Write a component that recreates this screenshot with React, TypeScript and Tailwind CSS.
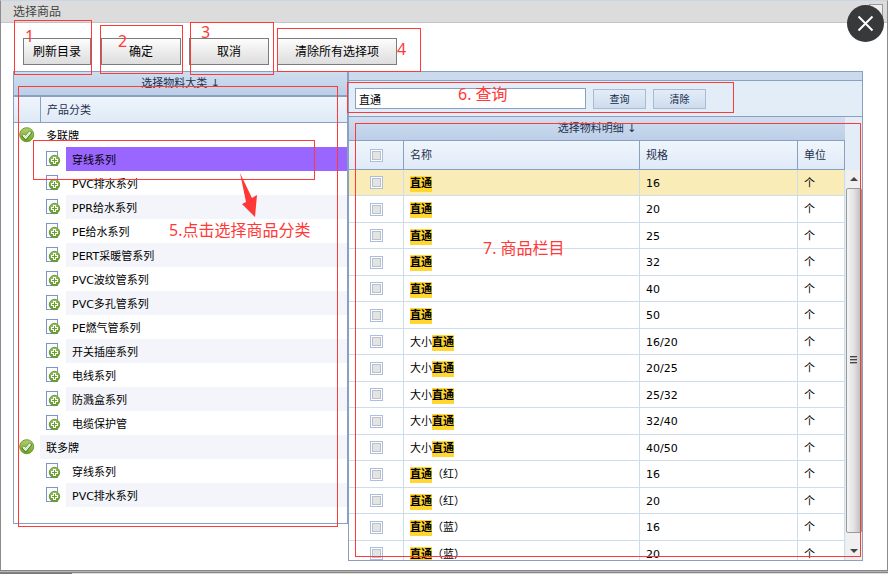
import React from "react";

type Category = { name: string; items: string[] };

const categories: Category[] = [
  {
    name: "多联牌",
    items: [
      "穿线系列",
      "PVC排水系列",
      "PPR给水系列",
      "PE给水系列",
      "PERT采暖管系列",
      "PVC波纹管系列",
      "PVC多孔管系列",
      "PE燃气管系列",
      "开关插座系列",
      "电线系列",
      "防溅盒系列",
      "电缆保护管",
    ],
  },
  { name: "联多牌", items: ["穿线系列", "PVC排水系列"] },
];

const products = [
  { before: "", after: "", spec: "16" },
  { before: "", after: "", spec: "20" },
  { before: "", after: "", spec: "25" },
  { before: "", after: "", spec: "32" },
  { before: "", after: "", spec: "40" },
  { before: "", after: "", spec: "50" },
  { before: "大小", after: "", spec: "16/20" },
  { before: "大小", after: "", spec: "20/25" },
  { before: "大小", after: "", spec: "25/32" },
  { before: "大小", after: "", spec: "32/40" },
  { before: "大小", after: "", spec: "40/50" },
  { before: "", after: "（红）", spec: "16" },
  { before: "", after: "（红）", spec: "20" },
  { before: "", after: "（蓝）", spec: "16" },
  { before: "", after: "（蓝）", spec: "20" },
];

function CheckIcon() {
  return (
    <svg width="16" height="16" viewBox="0 0 16 16" className="shrink-0">
      <defs>
        <linearGradient id="brand" x1="0" y1="0" x2="0" y2="1">
          <stop offset="0" stopColor="#b5cf70" />
          <stop offset="1" stopColor="#69a81f" />
        </linearGradient>
      </defs>
      <circle cx="7.7" cy="7.7" r="7" fill="url(#brand)" stroke="#6f9a33" />
      <path d="M3.6 7.8 6.7 10.9 11.8 4.6" fill="none" stroke="#4f7d24" strokeWidth="3.8" />
      <path d="M4.2 8 6.7 10.5 11.3 5" fill="none" stroke="#fff" strokeWidth="2.2" />
      <path d="M4.6 8.4 6.7 10.3 11 5.4" fill="none" stroke="#8fb552" strokeWidth="0.5" />
    </svg>
  );
}

function PageAddIcon() {
  return (
    <svg width="16" height="16" viewBox="0 0 16 16" className="shrink-0">
      <defs>
        <linearGradient id="leaf" x1="0" y1="0" x2="0" y2="1">
          <stop offset="0" stopColor="#9cc35a" />
          <stop offset="1" stopColor="#5a9a1c" />
        </linearGradient>
      </defs>
      <rect x="0.5" y="0.5" width="11" height="14" fill="#fbfcff" stroke="#7f93c6" />
      <circle cx="8.5" cy="9.5" r="5.2" fill="url(#leaf)" stroke="#6a9a3a" />
      <path d="M8.5 6v7M5 9.5h7" stroke="#fff" strokeWidth="3" />
      <path d="M8.5 7v5M6 9.5h5" stroke="#6da034" strokeWidth="1" />
    </svg>
  );
}

function ToolButton({ children, size }: { children: React.ReactNode; size: string }) {
  return (
    <button
      type="button"
      className={`h-[27px] border border-[#7c7c7c] bg-linear-to-b from-[#fdfdfd] via-[#ececec] to-[#dedede] text-xs text-black ${size}`}
    >
      {children}
    </button>
  );
}

function SearchButton({ children }: { children: React.ReactNode }) {
  return (
    <button
      type="button"
      className="h-5 w-[53px] border border-[#a9b9d6] bg-linear-to-b from-[#e3edf8] to-[#cddcee] pt-0.5 text-[10px] leading-4 text-[#15294b]"
    >
      {children}
    </button>
  );
}

function Tick({ label }: { label: string }) {
  return (
    <input
      type="checkbox"
      aria-label={label}
      className="mx-auto block size-[13px] appearance-none border border-[#a9bfdf] bg-[#e3e4e6] shadow-[inset_0_0_0_1px_#fff,inset_0_0_0_2px_#bcc0c6]"
    />
  );
}

function CategoryTree() {
  let index = -1;
  return (
    <ul className="pb-4">
      {categories.map((category) => {
        index += 1;
        return (
          <li key={category.name}>
            <div className="flex h-6 items-center pl-[5px]">
              <CheckIcon />
              <button
                type="button"
                className={`ml-[5px] h-6 flex-1 pt-1 pl-1.5 text-left ${index % 2 ? "bg-[#f4f5fa]" : ""}`}
              >
                {category.name}
              </button>
            </div>
            <ul>
              {category.items.map((item) => {
                index += 1;
                const tone = index === 1 ? "bg-[#9966ff]" : index % 2 ? "bg-[#f4f5fa]" : "";
                return (
                  <li key={item} className="flex h-6 items-center pl-8">
                    <PageAddIcon />
                    <button type="button" className={`ml-1 h-6 flex-1 pt-1 pl-1.5 text-left ${tone}`}>
                      {item}
                    </button>
                  </li>
                );
              })}
            </ul>
          </li>
        );
      })}
    </ul>
  );
}

function ProductTable() {
  return (
    <table className="w-full table-fixed border-separate border-spacing-0">
      <colgroup>
        <col className="w-[55px]" />
        <col />
        <col className="w-[158px]" />
        <col className="w-[47px]" />
      </colgroup>
      <thead>
        <tr className="h-[29px] bg-linear-to-b from-[#eff5fc] to-[#dfeaf7] text-left text-[#1f2f4d] *:border-r *:border-b *:border-[#8ba0c0] *:p-0 *:font-normal *:not-first:pt-0.5">
          <th>
            <Tick label="全选" />
          </th>
          <th>
            <span className="pl-1.5">名称</span>
          </th>
          <th>
            <span className="pl-1.5">规格</span>
          </th>
          <th>
            <span className="pl-1.5">单位</span>
          </th>
        </tr>
      </thead>
      <tbody>
        {products.map((product, i) => (
          <tr
            key={i}
            className={`*:border-r *:border-b *:border-[#cfdcec] *:p-0 *:not-first:pt-0.5 ${i % 2 ? "h-[27px]" : "h-[26px]"} ${i === 0 ? "bg-[#f9ecb7]" : "bg-white"}`}
          >
            <td>
              <Tick label={`选择 ${product.before}直通${product.after} ${product.spec}`} />
            </td>
            <td>
              <div className="pl-1.5">
                {product.before}
                <mark className="inline-block h-4 bg-[#ffd632] align-baseline leading-4 font-bold text-black">
                  直通
                </mark>
                <span className="font-['DejaVu_Sans','Noto_Sans_CJK_TC',sans-serif]">{product.after}</span>
              </div>
            </td>
            <td>
              <span className="pl-1.5">{product.spec}</span>
            </td>
            <td>
              <span className="pl-1.5">个</span>
            </td>
          </tr>
        ))}
      </tbody>
    </table>
  );
}

function ScrollBar() {
  return (
    <div className="flex w-[17px] shrink-0 flex-col bg-[#e3edf8] pt-[53px]">
      <div className="ml-px flex flex-1 flex-col bg-[#f0f0f0]">
        <button type="button" aria-label="向上滚动" className="flex h-[18px] items-center justify-center">
          <svg width="8" height="4" viewBox="0 0 8 4">
            <path d="M4 0 8 4H0z" fill="#444" />
          </svg>
        </button>
        <div className="flex flex-1 items-center justify-center rounded-xs border border-[#999] bg-linear-to-r from-[#f5f5f5] via-[#e2e2e2] to-[#bdbdbd]">
          <svg width="8" height="9" viewBox="0 0 8 9">
            <path d="M0 .5h7M0 3.5h7M0 6.5h7" stroke="#444" />
            <path d="M0 1.5h7M0 4.5h7M0 7.5h7" stroke="#aaa" />
          </svg>
        </div>
        <button type="button" aria-label="向下滚动" className="flex h-[27px] items-center justify-center pt-2">
          <svg width="8" height="4" viewBox="0 0 8 4">
            <path d="M0 0h8L4 4z" fill="#444" />
          </svg>
        </button>
      </div>
    </div>
  );
}

function Frame({ place }: { place: string }) {
  return <div className={`absolute border border-[#ff3838] ${place}`} />;
}

function Note({ place, children }: { place: string; children: React.ReactNode }) {
  return (
    <span className={`absolute leading-5 text-base whitespace-nowrap text-[#ff3838] ${place}`}>{children}</span>
  );
}

function Annotations() {
  return (
    <div className="pointer-events-none absolute inset-0 font-['Noto_Sans','Noto_Sans_CJK_SC',sans-serif]">
      <Frame place="left-[14px] top-[20px] w-[78px] h-[55px]" />
      <Frame place="left-[100px] top-[25px] w-[83px] h-[49px]" />
      <Frame place="left-[190px] top-[22px] w-[84px] h-[53px]" />
      <Frame place="left-[277px] top-[28px] w-[144px] h-[44px]" />
      <Frame place="left-[347px] top-[82px] w-[387px] h-[31px]" />
      <Frame place="left-[18px] top-[86px] w-[320px] h-[441px]" />
      <Frame place="left-[33px] top-[140px] w-[282px] h-[40px]" />
      <Frame place="left-[355px] top-[123px] w-[506px] h-[434px]" />
      <Note place="left-[25px] top-[26px]">1</Note>
      <Note place="left-[118px] top-[31px]">2</Note>
      <Note place="left-[201px] top-[22px]">3</Note>
      <Note place="left-[397px] top-[39px]">4</Note>
      <Note place="left-[169px] top-[220px]">5.点击选择商品分类</Note>
      <Note place="left-[458px] top-[84px]">6. 查询</Note>
      <Note place="left-[483px] top-[238px]">7. 商品栏目</Note>
      <svg className="absolute top-[173px] left-[239px]" width="20" height="44" viewBox="0 0 20 44">
        <path d="M1 0 13 25 18 22 16 44 3 31 7 29z" fill="#ff3838" />
      </svg>
    </div>
  );
}

export default function App() {
  return (
    <div className="relative flex h-screen flex-col overflow-hidden bg-white font-['DejaVu_Sans','Noto_Sans_CJK_SC',sans-serif] text-[11px] leading-4 text-black">
      <main className="flex min-h-0 flex-1 flex-col border-x border-t border-x-[#8c8c8c] border-t-[#c9d6e8]">
        <header className="flex h-[22px] shrink-0 items-center border-b border-[#c4c4c4] bg-[#dcdcdc] pl-3">
          <h1 className="text-xs text-[#444]">选择商品</h1>
        </header>

        <div className="flex shrink-0 gap-2 pt-[15px] pb-1.5 pl-[22px]">
          <ToolButton size="w-[68px] mr-0.5">刷新目录</ToolButton>
          <ToolButton size="w-20">确定</ToolButton>
          <ToolButton size="w-20">取消</ToolButton>
          <ToolButton size="w-[120px]">清除所有选择项</ToolButton>
        </div>

        <div className="flex min-h-0 flex-1 items-start pr-6 pb-[9px] pl-3">
          <section className="w-[335px] shrink-0 border border-[#8ba0c0]">
            <h2 className="h-[25px] border-b-2 border-[#8ba0c0] bg-linear-to-b from-[#cfdeef] to-[#bccfe8] pt-1 text-center text-[#1f2f4d]">
              选择物料大类 ↓
            </h2>
            <div className="flex h-[26px] border-b border-[#8ba0c0] bg-linear-to-b from-[#eff5fc] to-[#dfeaf7] text-[#1f2f4d]">
              <div className="w-[27px] border-r border-[#8ba0c0]" />
              <div className="pt-1.5 pl-1.5">产品分类</div>
            </div>
            <CategoryTree />
          </section>

          <section className="flex h-full min-w-0 flex-1 flex-col border border-[#8ba0c0] bg-white">
            <div className="h-[9px] shrink-0 border-b border-[#8ba0c0] bg-[#cbdaec]" />
            <form className="flex h-9 shrink-0 items-center gap-[7px] border-b border-[#8ba0c0] bg-[#e3edf8] pl-1.5">
              <input
                type="text"
                aria-label="查询"
                defaultValue="直通"
                className="h-[21px] w-[231px] border border-[#8ba0c0] bg-white px-[3px]"
              />
              <SearchButton>查询</SearchButton>
              <SearchButton>清除</SearchButton>
            </form>
            <div className="flex min-h-0 flex-1">
              <div className="min-w-0 flex-1 overflow-hidden">
                <h2 className="h-6 border-b border-[#8ba0c0] bg-linear-to-b from-[#cfdeef] to-[#bccfe8] pt-1 text-center text-[#1f2f4d]">
                  选择物料明细 ↓
                </h2>
                <ProductTable />
              </div>
              <ScrollBar />
            </div>
          </section>
        </div>
      </main>

      <footer className="flex h-1 shrink-0 flex-col border-t border-[#858585] bg-[#b4b4b4]">
        <div className="mt-px flex h-0.5 border-t border-[#858585] bg-[#dedede]">
          <div className="w-[72px] bg-[#777]" />
        </div>
      </footer>

      <Annotations />

      <div className="absolute top-1 right-[5px] size-3.5 border border-[#999] bg-[#eee]" />
      <button
        type="button"
        aria-label="关闭"
        className="absolute top-[5px] right-1 flex size-[37px] items-center justify-center rounded-full bg-[#38393b]"
      >
        <svg width="17" height="17" viewBox="0 0 17 17">
          <path d="M1.5 1.5 15.5 15.5M15.5 1.5 1.5 15.5" stroke="#fff" strokeWidth="2" />
        </svg>
      </button>
    </div>
  );
}
